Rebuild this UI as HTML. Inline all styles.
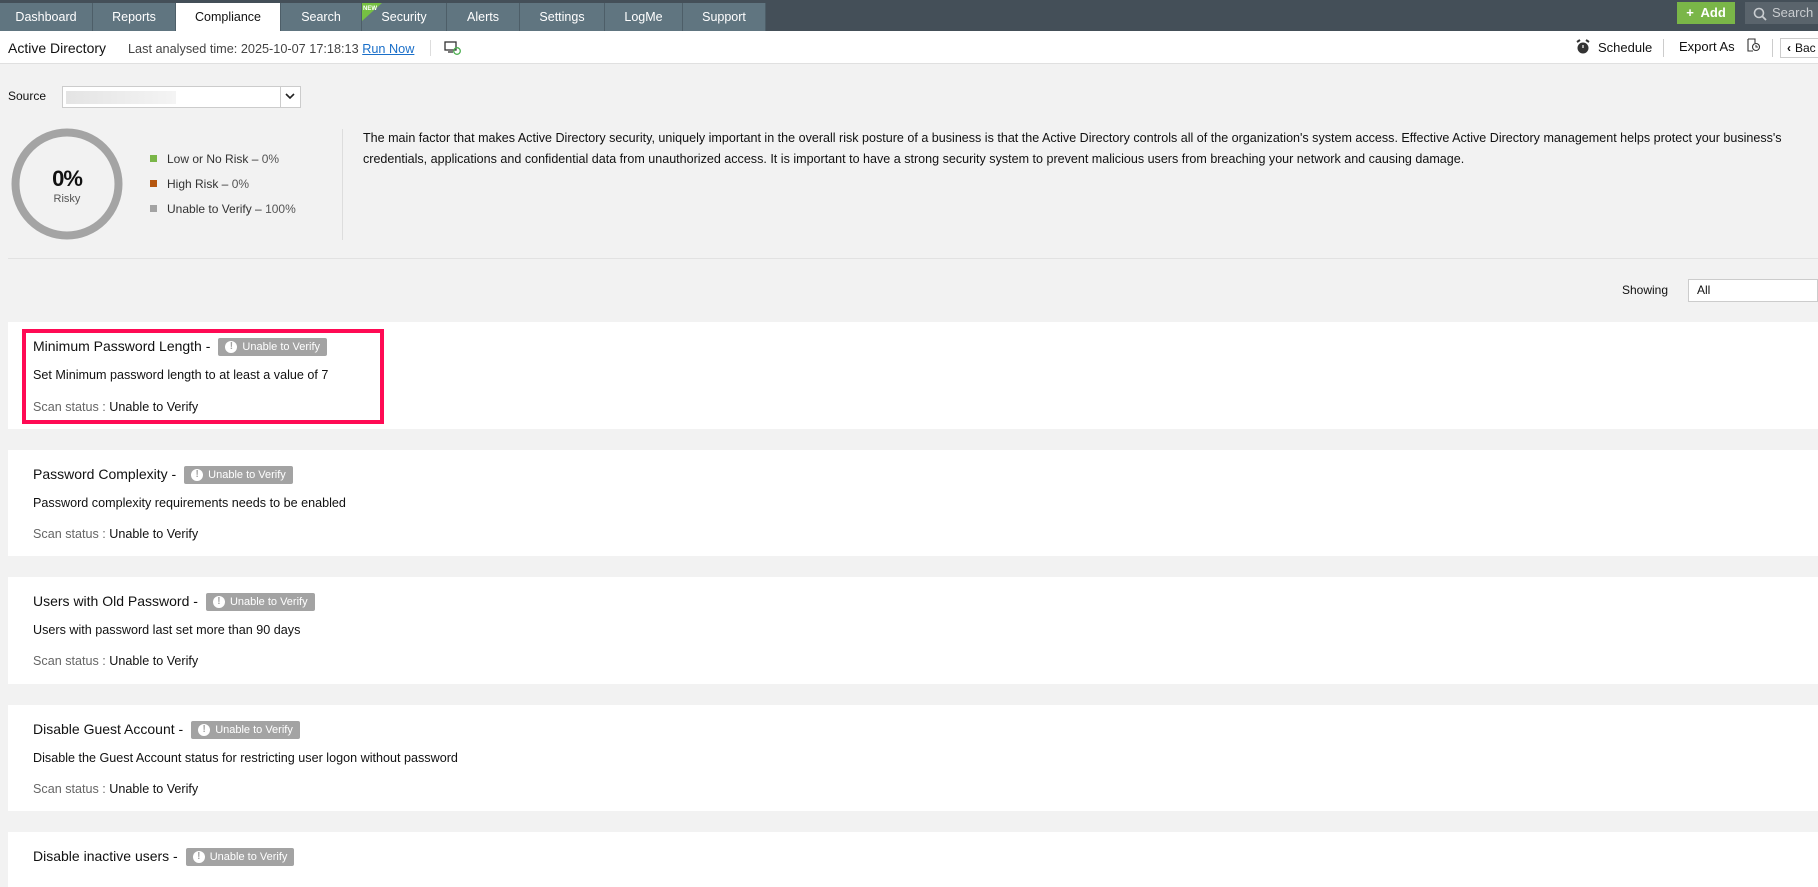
<!DOCTYPE html>
<html><head><meta charset="utf-8">
<style>
*{margin:0;padding:0;box-sizing:border-box}
body{width:1818px;height:887px;overflow:hidden;background:#f2f2f2;font-family:"Liberation Sans",sans-serif;color:#111;position:relative}
.abs{position:absolute}
#top{left:0;top:0;width:1818px;height:31px;background:#444f58}
.tab{position:absolute;top:3px;height:28px;background:#607580;color:#fff;font-size:12.5px;line-height:28px;text-align:center;border-right:1px solid #4d5e68}
.tab.act{background:#fff;color:#111}
#bar2{left:0;top:31px;width:1818px;height:33px;background:#fff;border-bottom:1px solid #e0e0e0}
.card{position:absolute;left:8px;width:1810px;background:#fff}
.ttl{position:absolute;left:25px;font-size:14px;color:#111}
.badge{display:inline-block;background:#a3a3a3;color:#fff;font-size:11px;height:18px;line-height:18px;padding:0 7px 0 24px;border-radius:2px;position:relative;margin-left:8px;vertical-align:1px}
.badge:before{content:"!";position:absolute;left:7px;top:3px;width:12px;height:12px;border-radius:50%;background:#fff;color:#a3a3a3;font-size:10px;line-height:12px;text-align:center;font-weight:bold}
.dsc{position:absolute;left:25px;font-size:12.6px;color:#111}
.scn{position:absolute;left:25px;font-size:12.6px;color:#111}
.scn span{color:#666}
.leg{position:absolute;left:150px;font-size:12px;color:#333}
.leg i{position:absolute;left:0;top:3px;width:7px;height:7px}
.leg b{font-weight:normal;position:absolute;left:17px;white-space:nowrap}
</style></head><body>
<div id="top" class="abs"></div>
<div class="tab" style="left:0;width:93px">Dashboard</div>
<div class="tab" style="left:93px;width:83px">Reports</div>
<div class="tab act" style="left:176px;width:105px">Compliance</div>
<div class="tab" style="left:281px;width:81px">Search</div>
<div class="tab" style="left:362px;width:85px">Security</div>
<svg class="abs" style="left:362px;top:3px" width="20" height="18"><polygon points="0,0 20,0 0,18" fill="#76c043"/><text x="1" y="7" font-size="6" fill="#fff" font-family="Liberation Sans" font-weight="bold">NEW</text></svg>
<div class="tab" style="left:447px;width:73px">Alerts</div>
<div class="tab" style="left:520px;width:85px">Settings</div>
<div class="tab" style="left:605px;width:78px">LogMe</div>
<div class="tab" style="left:683px;width:83px">Support</div>
<div class="abs" style="left:1677px;top:2px;width:58px;height:22px;background:#7ab648;color:#fff;font-size:13px;line-height:22px;text-align:center;font-weight:bold">+&nbsp; Add</div>
<div class="abs" style="left:1745px;top:2px;width:73px;height:22px;background:#5a646c;color:#c9cdd0;font-size:13px;line-height:22px;padding-left:27px">Search</div>
<svg class="abs" style="left:1753px;top:7px" width="14" height="14"><circle cx="6" cy="6" r="4.5" stroke="#c9cdd0" stroke-width="1.6" fill="none"/><line x1="9.5" y1="9.5" x2="13" y2="13" stroke="#c9cdd0" stroke-width="1.8"/></svg>

<div id="bar2" class="abs"></div>
<div class="abs" style="left:8px;top:40px;font-size:14px">Active Directory</div>
<div class="abs" style="left:128px;top:42px;font-size:12.7px;color:#444">Last analysed time: 2025-10-07 17:18:13 <span style="color:#1a6fc9;text-decoration:underline">Run Now</span></div>
<div class="abs" style="left:430px;top:40px;width:1px;height:16px;background:#ddd"></div>
<svg class="abs" style="left:444px;top:40px" width="18" height="16"><rect x="1" y="2" width="11" height="8" fill="none" stroke="#333" stroke-width="1.3"/><line x1="4" y1="12" x2="9" y2="12" stroke="#333" stroke-width="1.3"/><circle cx="13" cy="11" r="3.3" fill="none" stroke="#4caf50" stroke-width="1.3"/></svg>
<svg class="abs" style="left:1575px;top:39px" width="16" height="16"><circle cx="8" cy="9" r="5.5" fill="#333"/><line x1="2" y1="3" x2="5" y2="1" stroke="#333" stroke-width="2"/><line x1="14" y1="3" x2="11" y2="1" stroke="#333" stroke-width="2"/><line x1="8" y1="6" x2="8" y2="9" stroke="#fff" stroke-width="1.2"/></svg>
<div class="abs" style="left:1598px;top:40px;font-size:13px">Schedule</div>
<div class="abs" style="left:1663px;top:39px;width:1px;height:18px;background:#ccc"></div>
<div class="abs" style="left:1679px;top:39px;font-size:13px">Export As</div>
<svg class="abs" style="left:1746px;top:38px" width="15" height="15"><path d="M2 1h7v4M2 1v12h5" fill="none" stroke="#333" stroke-width="1.1"/><circle cx="10" cy="9" r="3.5" fill="none" stroke="#333" stroke-width="1.1"/><path d="M10 7v2h2" fill="none" stroke="#333"/></svg>
<div class="abs" style="left:1772px;top:39px;width:1px;height:18px;background:#ccc"></div>
<div class="abs" style="left:1780px;top:38px;width:40px;height:20px;border:1px solid #ccc;border-right:none;font-size:12px;line-height:18px;padding-left:14px;background:#fff">Bac</div>
<div class="abs" style="left:1787px;top:41px;font-size:12px;font-weight:bold">‹</div>

<div class="abs" style="left:8px;top:89px;font-size:12px">Source</div>
<div class="abs" style="left:62px;top:86px;width:239px;height:22px;background:#fff;border:1px solid #ccc"></div>
<div class="abs" style="left:66px;top:91px;width:110px;height:13px;background:linear-gradient(90deg,#e4e4e4,#ececec,#f4f4f4)"></div>
<div class="abs" style="left:280px;top:86px;width:1px;height:22px;background:#ccc"></div>
<svg class="abs" style="left:285px;top:93px" width="10" height="8"><path d="M1 1l4 4 4-4" fill="none" stroke="#222" stroke-width="1.6"/></svg>

<svg class="abs" style="left:11px;top:128px" width="112" height="112"><circle cx="56" cy="56" r="51.5" fill="none" stroke="#a4a4a4" stroke-width="8"/></svg>
<div class="abs" style="left:11px;top:166px;width:112px;text-align:center;font-size:22px;font-weight:bold;letter-spacing:-1px">0%</div>
<div class="abs" style="left:11px;top:193px;width:112px;text-align:center;font-size:11px;color:#555">Risky</div>
<div class="leg" style="top:152px"><i style="background:#7ab648"></i><b>Low or No Risk – <span style="color:#555">0%</span></b></div>
<div class="leg" style="top:177px"><i style="background:#b5560f"></i><b>High Risk – <span style="color:#555">0%</span></b></div>
<div class="leg" style="top:202px"><i style="background:#a3a3a3"></i><b>Unable to Verify – <span style="color:#555">100%</span></b></div>
<div class="abs" style="left:342px;top:129px;width:1px;height:111px;background:#ddd"></div>
<div class="abs" style="left:363px;top:128px;font-size:12.55px;line-height:21px;white-space:nowrap;color:#111">The main factor that makes Active Directory security, uniquely important in the overall risk posture of a business is that the Active Directory controls all of the organization's system access. Effective Active Directory management helps protect your business's<br>credentials, applications and confidential data from unauthorized access. It is important to have a strong security system to prevent malicious users from breaching your network and causing damage.</div>
<div class="abs" style="left:8px;top:258px;width:1810px;height:1px;background:#e2e2e2"></div>
<div class="abs" style="left:1622px;top:283px;font-size:12px">Showing</div>
<div class="abs" style="left:1688px;top:279px;width:130px;height:23px;background:#fff;border:1px solid #ccc;font-size:12px;line-height:21px;padding-left:8px">All</div>

<div class="card" style="top:322px;height:107px">
<div class="abs" style="left:14px;top:7px;width:362px;height:95px;border:4.5px solid #ff0a54"></div>
<div class="ttl" style="top:16px">Minimum Password Length -<span class="badge">Unable to Verify</span></div>
<div class="dsc" style="top:46px">Set Minimum password length to at least a value of 7</div>
<div class="scn" style="top:78px"><span>Scan status :</span> Unable to Verify</div>
</div>
<div class="card" style="top:450px;height:106px">
<div class="ttl" style="top:16px">Password Complexity -<span class="badge">Unable to Verify</span></div>
<div class="dsc" style="top:46px">Password complexity requirements needs to be enabled</div>
<div class="scn" style="top:77px"><span>Scan status :</span> Unable to Verify</div>
</div>
<div class="card" style="top:577px;height:107px">
<div class="ttl" style="top:16px">Users with Old Password -<span class="badge">Unable to Verify</span></div>
<div class="dsc" style="top:46px">Users with password last set more than 90 days</div>
<div class="scn" style="top:77px"><span>Scan status :</span> Unable to Verify</div>
</div>
<div class="card" style="top:705px;height:106px">
<div class="ttl" style="top:16px">Disable Guest Account -<span class="badge">Unable to Verify</span></div>
<div class="dsc" style="top:46px">Disable the Guest Account status for restricting user logon without password</div>
<div class="scn" style="top:77px"><span>Scan status :</span> Unable to Verify</div>
</div>
<div class="card" style="top:832px;height:55px">
<div class="ttl" style="top:16px">Disable inactive users -<span class="badge">Unable to Verify</span></div>
</div>
</body></html>
